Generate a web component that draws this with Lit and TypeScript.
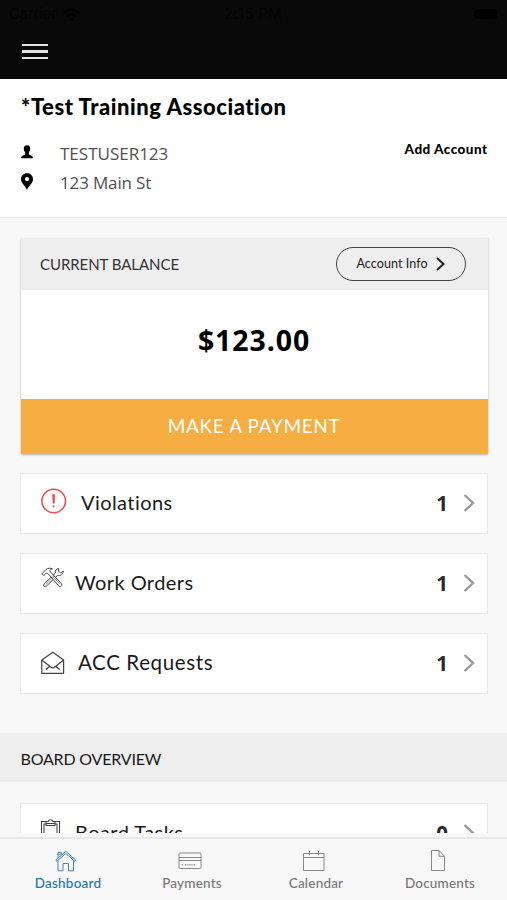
import { LitElement, html, css, TemplateResult } from "lit";
import { customElement, property } from "lit/decorators.js";

const chevron = html`<svg class="chevron" width="12" height="18" viewBox="0 0 12 18" fill="none" stroke="#999" stroke-width="2.4">
  <path d="M1.500 1 10 9l-8.500 8" />
</svg>`;

const icons: Record<string, TemplateResult> = {
  alert: html`<svg width="26" height="26" viewBox="0 0 26 26" fill="none" stroke="#ee4a4a">
    <circle cx="12.700" cy="13" r="11.8" stroke-width="1.5" />
    <path d="M11.700 6.500h2l-.3 8.700H12z" fill="#ee4a4a" stroke-width=".6" />
    <circle cx="12.700" cy="18.300" r="1" fill="#ee4a4a" stroke="none" />
  </svg>`,
  tools: html`<svg width="24" height="22" viewBox="0 0 24 22" fill="#fff" stroke="#444" stroke-width="1" stroke-linejoin="round">
    <path d="M17.800 1.500c-2.600.2-4 2.200-3.400 4.500L3.200 17c-1.600 1.500.5 3.800 2.200 2.200L16.600 8.300c2.800.8 5.700-1 5.700-4.100l-2.700 1.700-2.100-1.700z" />
    <path d="M1 6.800 4.800 2.600c2-1.700 4.600-1.700 6.600-.8-1.700.4-2.600 1.200-2.500 2.400l1.700 2 9.800 10.400c1.500 1.800-1 4-2.600 2.400L8.500 8.200 6.800 6.400 5.200 6.200 2.700 8.600z" />
    <path d="m4.600 17.800 9-8.800M11 8.600l7.900 8.500" fill="none" stroke-width=".6" />
  </svg>`,
  mail: html`<svg width="24" height="24" viewBox="0 0 24 24" fill="none" stroke="#444" stroke-width="1.200" stroke-linejoin="round">
    <path d="M.8 9 11.800 1.200 22.600 9v13.300H.8z" />
    <path d="m.8 9 9 7c1.300 1 2.700 1 4 0l8.800-7M5 18.500 8.800 15.300M18.500 18.500l-3.700-3.200" />
  </svg>`,
  clipboard: html`<svg width="22" height="26" viewBox="0 0 22 26" fill="none" stroke="#444" stroke-width="1.100">
    <path d="M6 2.500H1.500v22h18v-22H15" />
    <path d="M6 5H4v17h13V5h-2" />
    <path d="M6 6.500v-4h2.300c.6-2.400 3.800-2.400 4.400 0H15v4zM6 4.500h9" />
  </svg>`,
  home: html`<svg width="22" height="22" viewBox="0 0 22 22" fill="none" stroke="#3f86bd" stroke-width="1">
    <path d="M3 10.800v10h5v-7.300h5.500v7.300h5V10.800" />
    <path d="M1.700 11.300.9 9.900l9.900-8.500 9.800 8.500-.9 1.400-8.900-7.700z" />
    <path d="M3 7.600V2.400h3.300v2.300M2.500 4.300h4" />
  </svg>`,
  credit: html`<svg width="24" height="18" viewBox="0 0 24 18" fill="none" stroke="#888" stroke-width="1">
    <rect x="1" y="1" width="22" height="15.500" rx="1.200" />
    <path d="M1 5.500h22M1 8.500h22" />
    <path d="M3.500 12.800h2M7 12.800h10" stroke-dasharray="1.500 .6" />
  </svg>`,
  calendar: html`<svg width="22" height="22" viewBox="0 0 22 22" fill="none" stroke="#888" stroke-width="1">
    <path d="M.5 3.500h20.500v17H.5zM.5 7.500h20.500M6.500 1v4.300M15.500 1v4.300" />
  </svg>`,
  doc: html`<svg width="16" height="22" viewBox="0 0 16 22" fill="none" stroke="#888" stroke-width="1">
    <path d="M1.500.5h7.600l5.400 5.800v14.200h-13zM9.100.5v5.800h5.400" />
  </svg>`,
};

@customElement("count-row")
export class CountRow extends LitElement {
  @property() icon = "";
  @property() count = "";

  static styles = css`
    :host {
      display: flex;
      box-sizing: border-box;
      height: 61px;
      margin: 0 19px 19px 20px;
      padding: 0 12.500px 4px 19px;
      align-items: center;
      background: #fff;
      border: 1px solid #e9e9e9;
      color: #1a1a1a;
      font-size: 20px;
      line-height: 26px;
    }
    svg { display: block; }
    .icon { flex: none; box-sizing: border-box; }
    .alert { width: 41px; margin-top: -1px; padding-left: .5px; }
    .tools { width: 35px; margin-top: -8px; padding-left: 1px; }
    .mail { width: 38px; margin-top: 2px; padding-left: .5px; }
    .clipboard { width: 35px; }
    .label { flex: 1; letter-spacing: .43px; }
    .mail + .label { font-size: 20.500px; letter-spacing: .62px; padding-top: 1px; }
    .count { font-family: "Open Sans", sans-serif; font-size: 20.500px; font-weight: 700; margin: 2px 14.500px 0 0; color: #2a2a2a; }
    .chevron { margin-top: 2px; }
  `;

  render() {
    return html`
      <span class="icon ${this.icon}">${icons[this.icon]}</span>
      <span class="label"><slot></slot></span>
      <span class="count">${this.count}</span>
      ${chevron}
    `;
  }
}

@customElement("app-root")
export class AppRoot extends LitElement {
  static styles = css`
    :host {
      display: flex;
      flex-direction: column;
      width: 507px;
      height: 900px;
      overflow: hidden;
      background: #f8f8f8;
      font-family: Lato, "Open Sans", sans-serif;
      color: #000;
    }
    svg { display: block; flex: none; }
    .header { flex: none; height: 79px; background: #090909; }
    .status {
      display: grid;
      grid-template-columns: 1fr auto 1fr;
      align-items: center;
      height: 28px;
      padding: 0 10px 0 9px;
      color: #030303;
      font: 15px/28px Inter, sans-serif;
    }
    .carrier { display: flex; align-items: center; gap: 6px; letter-spacing: -.2px; }
    .battery { justify-self: end; width: 23px; height: 10px; border-radius: 3px; background: #000; }
    .time { letter-spacing: .3px; }
    .menu { display: grid; gap: 4px; width: 26px; margin: 15.500px 0 0 22px; }
    .menu i { height: 2.500px; background: #e2e2e2; }
    .scroll { flex: none; height: 754px; overflow: hidden; }
    .account {
      box-sizing: border-box;
      display: flex;
      flex-direction: column;
      height: 139px;
      padding: 15px 19.500px 0 21px;
      background: #fff;
      border-bottom: 1.500px solid #e9e9e9;
    }
    .title { font-size: 22px; line-height: 26px; font-weight: 900; letter-spacing: .53px; }
    .info { display: flex; justify-content: space-between; margin-top: 19px; }
    .line {
      display: grid;
      grid-template-columns: 39px auto;
      height: 29px;
      align-items: center;
      font-family: "Open Sans", sans-serif;
      font-size: 17px;
      line-height: 29px;
      color: #505050;
    }
    .line svg { margin-top: -4px; fill: #000; }
    .line .pin { margin-top: -3px; }
    .street { letter-spacing: -.15px; }
    .add { font-size: 13.500px; line-height: 20px; font-weight: 900; letter-spacing: .47px; }
    .balance { margin: 20px 19.500px 19px 20.500px; background: #fff; box-shadow: 0 1px 2px rgba(0, 0, 0, .28); }
    .cardhead { display: flex; align-items: center; justify-content: space-between; height: 52px; padding: 0 22px 0 19.500px; background: #eee; }
    .cap { font-size: 15px; line-height: 20px; letter-spacing: -.06px; color: #333; }
    .pill {
      box-sizing: border-box;
      display: flex;
      align-items: center;
      width: 130px;
      height: 34px;
      padding: 0 0 1px 20px;
      gap: 8px;
      border: 1.500px solid #444;
      border-radius: 17px;
      font-size: 12.500px;
      color: #222;
    }
    .pill span { letter-spacing: .08px; }
    .amount { height: 109px; line-height: 101px; text-align: center; font-family: "Open Sans", sans-serif; font-size: 28.500px; font-weight: 700; letter-spacing: .9px; }
    .pay { height: 55px; line-height: 53px; text-align: center; font-size: 19px; letter-spacing: .65px; background: #f6ad42; color: #fff; }
    .section { height: 49px; margin: 39px 0 21px; padding-left: 20.500px; line-height: 51px; background: #eee; font-size: 16px; letter-spacing: -.2px; color: #1a1a1a; }
    .tabs { flex: none; display: flex; box-sizing: border-box; height: 63px; margin-top: 4px; border-top: 2px solid #e8e8e8; padding-left: 6px; }
    .tab { flex: none; width: 124px; display: flex; flex-direction: column; align-items: center; color: #777; font-size: 13.500px; line-height: 18px; letter-spacing: .2px; font-weight: 500; }
    .glyph { box-sizing: border-box; height: 35px; display: flex; align-items: center; padding-top: 8px; margin-right: 4.500px; }
    .tab.on { color: #2176b4; }
  `;

  private tab(icon: string, label: string, on = false) {
    return html`<div class="tab ${on ? "on" : ""}">
      <span class="glyph">${icons[icon]}</span><span>${label}</span>
    </div>`;
  }

  render() {
    return html`
      <div class="header">
        <div class="status">
          <span class="carrier">Carrier
            <svg width="17" height="13" viewBox="0 0 17 13" fill="none" stroke="#000" stroke-width="2.400">
              <path d="M1 5c4-4.500 11-4.500 15 0M4 8.500c2.500-2.500 6.500-2.500 9 0M7 11.500h3" />
            </svg>
          </span>
          <span class="time">2:15 PM</span>
          <span class="battery"></span>
        </div>
        <div class="menu"><i></i><i></i><i></i></div>
      </div>
      <div class="scroll">
        <div class="account">
          <div class="title">*Test Training Association</div>
          <div class="info">
            <div>
              <div class="line">
                <svg width="12" height="14" viewBox="0 0 12 14"><path d="M6 .2C8.100.2 9.400 1.700 9.200 4 9.100 5.700 8.400 6.700 7.800 7.400v1.900c.6 1.200 4.200 1 4.200 3.900H0c0-2.900 3.600-2.700 4.200-3.900V7.400C3.600 6.700 2.900 5.700 2.800 4 2.600 1.700 3.900.2 6 .2z" /></svg>
                <span>TESTUSER123</span>
              </div>
              <div class="line">
                <svg class="pin" width="12" height="17" viewBox="0 0 12 17"><path fill-rule="evenodd" d="M6 .2c3.400 0 6 2.600 6 5.900 0 4-3.500 5.900-6 10.800C3.500 12 0 10.100 0 6.100 0 2.800 2.600.2 6 .2zM6 4a2.100 2.100 0 1 0 0 4.200A2.100 2.100 0 0 0 6 4z" /></svg>
                <span class="street">123 Main St</span>
              </div>
            </div>
            <div class="add">Add Account</div>
          </div>
        </div>
        <div class="balance">
          <div class="cardhead">
            <span class="cap">CURRENT BALANCE</span>
            <span class="pill"><span>Account Info</span>
              <svg width="9" height="14" viewBox="0 0 9 14" fill="none" stroke="#222" stroke-width="2"><path d="m1 1 6.500 6L1 13" /></svg>
            </span>
          </div>
          <div class="amount">$123.00</div>
          <div class="pay">MAKE A PAYMENT</div>
        </div>
        <count-row icon="alert" count="1">Violations</count-row>
        <count-row icon="tools" count="1">Work Orders</count-row>
        <count-row icon="mail" count="1">ACC Requests</count-row>
        <div class="section">BOARD OVERVIEW</div>
        <count-row icon="clipboard" count="0">Board Tasks</count-row>
      </div>
      <div class="tabs">
        ${this.tab("home", "Dashboard", true)}
        ${this.tab("credit", "Payments")}
        ${this.tab("calendar", "Calendar")}
        ${this.tab("doc", "Documents")}
      </div>
    `;
  }
}
